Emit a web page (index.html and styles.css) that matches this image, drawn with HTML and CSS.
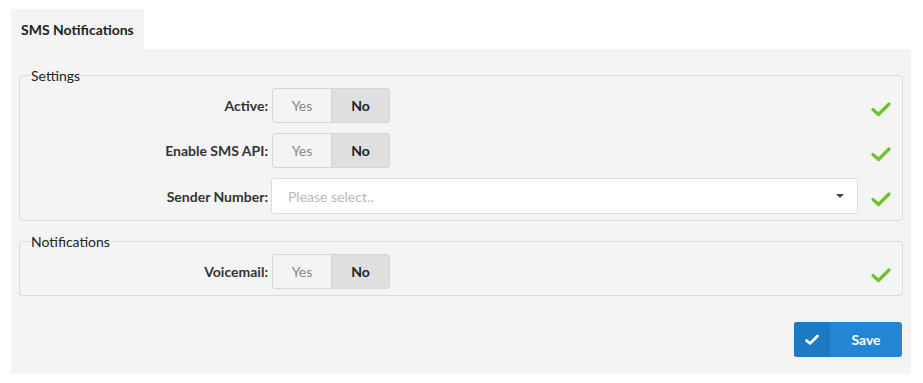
FILE: index.html
```html
<!DOCTYPE html>
<html>
<head>
<meta charset="utf-8">
<link rel="stylesheet" href="styles.css">
</head>
<body>
<div class="page">
  <div class="tabs"><div class="tab">SMS Notifications</div></div>
  <div class="panel">
    <fieldset class="group">
      <legend>Settings</legend>
      <div class="row">
        <label class="lbl">Active:</label>
        <div class="toggle"><span class="opt">Yes</span><span class="opt on">No</span></div>
        <span class="fill"></span>
        <svg class="check" width="20" height="16" viewBox="0 0 20 16"><path d="M2 8.5 L7.5 13.5 L18 3" fill="none" stroke="#6ec22b" stroke-width="3.2" stroke-linecap="round" stroke-linejoin="round"/></svg>
      </div>
      <div class="row">
        <label class="lbl">Enable SMS API:</label>
        <div class="toggle"><span class="opt">Yes</span><span class="opt on">No</span></div>
        <span class="fill"></span>
        <svg class="check" width="20" height="16" viewBox="0 0 20 16"><path d="M2 8.5 L7.5 13.5 L18 3" fill="none" stroke="#6ec22b" stroke-width="3.2" stroke-linecap="round" stroke-linejoin="round"/></svg>
      </div>
      <div class="row">
        <label class="lbl">Sender Number:</label>
        <div class="select"><span class="ph">Please select..</span><span class="caret"></span></div>
        <svg class="check" width="20" height="16" viewBox="0 0 20 16"><path d="M2 8.5 L7.5 13.5 L18 3" fill="none" stroke="#6ec22b" stroke-width="3.2" stroke-linecap="round" stroke-linejoin="round"/></svg>
      </div>
    </fieldset>
    <fieldset class="group">
      <legend>Notifications</legend>
      <div class="row">
        <label class="lbl">Voicemail:</label>
        <div class="toggle"><span class="opt">Yes</span><span class="opt on">No</span></div>
        <span class="fill"></span>
        <svg class="check" width="20" height="16" viewBox="0 0 20 16"><path d="M2 8.5 L7.5 13.5 L18 3" fill="none" stroke="#6ec22b" stroke-width="3.2" stroke-linecap="round" stroke-linejoin="round"/></svg>
      </div>
    </fieldset>
    <div class="actions">
      <button class="save"><span class="save-icon"><svg width="14" height="12" viewBox="0 0 14 12"><path d="M1.5 6.5 L5 9.5 L12.5 2" fill="none" stroke="#fff" stroke-width="2.6" stroke-linecap="round" stroke-linejoin="round"/></svg></span><span class="save-text">Save</span></button>
    </div>
  </div>
</div>
</body>
</html>
```

FILE: styles.css
```css
* { box-sizing: border-box; }
html, body { margin: 0; padding: 0; background: #fff; }
body { font-family: Lato, "Open Sans", sans-serif; font-size: 14px; color: #333; }
.page { padding: 9px 12px 0 11px; }
.tabs { display: flex; }
.tab {
  background: #f4f4f4;
  height: 40px;
  width: 133px;
  padding: 0 10px;
  display: flex;
  align-items: center;
  font-weight: bold;
  font-size: 14px;
  color: #222;
}
.panel {
  background: #f4f4f4;
  width: 900px;
  padding: 18px 8px 17px 8px;
}
.group {
  margin: 0 0 12px 0;
  padding: 4px 0 6px 10px;
  border: 1px solid #dadada;
  border-radius: 3px;
  min-width: 0;
}
.group legend {
  padding: 0 1px;
  font-size: 14px;
  line-height: 17px;
  color: #222;
}
.row {
  display: flex;
  align-items: center;
  margin-bottom: 10px;
}
.row:last-child { margin-bottom: 0; }
.lbl {
  width: 242px;
  text-align: right;
  font-weight: bold;
  color: #333;
  padding-right: 4px;
}
.toggle {
  display: flex;
  height: 35px;
  border: 1px solid #d6d6d6;
  border-radius: 3px;
  overflow: hidden;
  background: #f4f4f4;
}
.opt {
  display: flex;
  align-items: center;
  justify-content: center;
  width: 58px;
  color: #888;
}
.opt.on {
  background: #dfdfdf;
  border-left: 1px solid #d0d0d0;
  color: #222;
  font-weight: bold;
}
.fill { flex: 1; }
.select {
  flex: 1;
  height: 36px;
  margin-left: -1px;
  background: #fff;
  border: 1px solid #dcdcdc;
  border-radius: 3px;
  display: flex;
  align-items: center;
  padding: 0 13px 0 16px;
}
.ph { flex: 1; color: #b8b8b8; }
.caret {
  width: 0; height: 0;
  border-left: 4px solid transparent;
  border-right: 4px solid transparent;
  border-top: 4px solid #444;
}
.check { margin: 6px 11px 0 13px; }
.actions {
  display: flex;
  justify-content: flex-end;
  padding-top: 14px;
  padding-right: 1px;
}
.save {
  display: flex;
  height: 35px;
  width: 108px;
  padding: 0;
  border: none;
  border-radius: 3px;
  overflow: hidden;
  background: #2385d3;
  color: #fff;
  font-family: Lato, "Open Sans", sans-serif;
  font-weight: bold;
  font-size: 14px;
}
.save-icon {
  width: 36px;
  background: #1f79c3;
  display: flex;
  align-items: center;
  justify-content: center;
}
.save-text {
  flex: 1;
  display: flex;
  align-items: center;
  justify-content: center;
}
```
